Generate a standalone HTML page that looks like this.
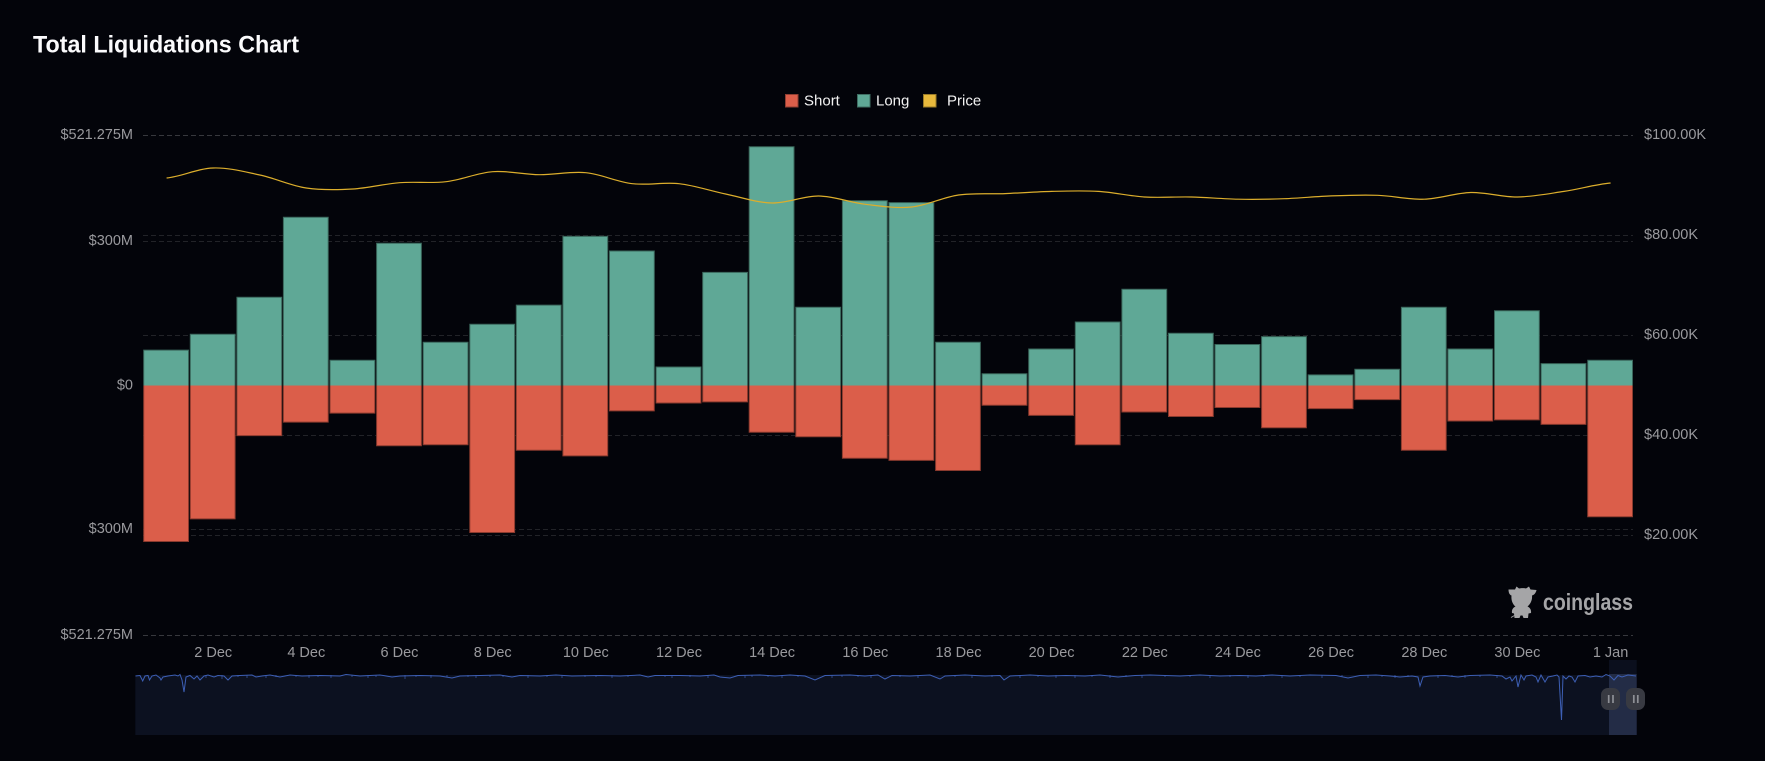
<!DOCTYPE html>
<html><head><meta charset="utf-8"><title>Total Liquidations Chart</title>
<style>
html,body{margin:0;padding:0;background:#03040a;width:1765px;height:761px;overflow:hidden}
svg{display:block}
text{font-family:"Liberation Sans",sans-serif}
</style></head><body>
<svg width="1765" height="761" viewBox="0 0 1765 761" xmlns="http://www.w3.org/2000/svg">
<rect width="1765" height="761" fill="#03040a"/>
<text x="33" y="52.5" font-size="24" font-weight="700" fill="#fbfbfd" textLength="266" lengthAdjust="spacingAndGlyphs">Total Liquidations Chart</text>

<g font-size="15" fill="#f2f2f2">
<rect x="785.5" y="94.5" width="12.5" height="12.5" fill="#db5e4a" stroke="#8f3e32"/><text x="804" y="105.5">Short</text>
<rect x="857.5" y="94.5" width="12.5" height="12.5" fill="#5fa896" stroke="#3f6e63"/><text x="876" y="105.5">Long</text>
<rect x="923.5" y="94.5" width="12.5" height="12.5" fill="#e8b93c" stroke="#9a7b28"/><text x="947" y="105.5">Price</text>
</g>

<g stroke-width="1" stroke-dasharray="5 3" fill="none">
<path stroke="#37383d" d="M143 135.5H1633M143 635.5H1633"/>
<path stroke="#222328" d="M143 235.5H1633M143 241.5H1633M143 335.5H1633M143 435.5H1633M143 529.5H1633M143 535.5H1633"/>
</g>

<g transform="translate(.4 0)">
<path fill="#5fa896" stroke="#3a665b" stroke-width="1" d="M143.3 385.5V350.1h44.8V385.5M189.9 385.5V334.3h44.8V385.5M236.5 385.5V297.2h44.8V385.5M283 385.5V217.3h44.8V385.5M329.6 385.5V360.2h44.8V385.5M376.2 385.5V243.2h44.8V385.5M422.8 385.5V342.2h44.8V385.5M469.4 385.5V324.2h44.8V385.5M515.9 385.5V305.1h44.8V385.5M562.5 385.5V236.4h44.8V385.5M609.1 385.5V251h44.8V385.5M655.7 385.5V367h44.8V385.5M702.3 385.5V272.4h44.8V385.5M748.8 385.5V146.7h44.8V385.5M795.4 385.5V307.3h44.8V385.5M842 385.5V200.7h44.8V385.5M888.6 385.5V202.6h44.8V385.5M935.2 385.5V342.2h44.8V385.5M981.7 385.5V373.7h44.8V385.5M1028.3 385.5V349h44.8V385.5M1074.9 385.5V322h44.8V385.5M1121.5 385.5V289.3h44.8V385.5M1168.1 385.5V333.2h44.8V385.5M1214.6 385.5V344.5h44.8V385.5M1261.2 385.5V336.6h44.8V385.5M1307.8 385.5V374.9h44.8V385.5M1354.4 385.5V369.2h44.8V385.5M1401 385.5V307.3h44.8V385.5M1447.5 385.5V349h44.8V385.5M1494.1 385.5V310.7h44.8V385.5M1540.7 385.5V363.6h44.8V385.5M1587.3 385.5V360.2h44.8V385.5"/>
<path fill="#db5e4a" stroke="#8a3a2e" stroke-width="1" d="M143.3 385.5V541.5h44.8V385.5M189.9 385.5V518.9h44.8V385.5M236.5 385.5V435.6h44.8V385.5M283 385.5V422.1h44.8V385.5M329.6 385.5V413.1h44.8V385.5M376.2 385.5V445.8h44.8V385.5M422.8 385.5V444.7h44.8V385.5M469.4 385.5V532.5h44.8V385.5M515.9 385.5V450.3h44.8V385.5M562.5 385.5V455.9h44.8V385.5M609.1 385.5V410.9h44.8V385.5M655.7 385.5V403h44.8V385.5M702.3 385.5V401.9h44.8V385.5M748.8 385.5V432.3h44.8V385.5M795.4 385.5V436.8h44.8V385.5M842 385.5V458.2h44.8V385.5M888.6 385.5V460.4h44.8V385.5M935.2 385.5V470.5h44.8V385.5M981.7 385.5V405.3h44.8V385.5M1028.3 385.5V415.4h44.8V385.5M1074.9 385.5V444.7h44.8V385.5M1121.5 385.5V412h44.8V385.5M1168.1 385.5V416.5h44.8V385.5M1214.6 385.5V407.5h44.8V385.5M1261.2 385.5V427.8h44.8V385.5M1307.8 385.5V408.6h44.8V385.5M1354.4 385.5V399.6h44.8V385.5M1401 385.5V450.3h44.8V385.5M1447.5 385.5V421h44.8V385.5M1494.1 385.5V419.9h44.8V385.5M1540.7 385.5V424.4h44.8V385.5M1587.3 385.5V516.7h44.8V385.5"/>
</g>

<path fill="none" stroke="#dcae2c" stroke-width="1.2" d="M166.6 178C182.1 176.3 197.7 168.5 213.2 168S244.3 171.7 259.8 175S290.8 185.7 306.3 188S337.4 189.9 352.9 189S384 183.9 399.5 182.7S430.6 183.5 446.1 181.7S477.2 172.9 492.7 171.7S523.7 174.5 539.2 174.7S570.3 171.2 585.8 172.7S616.9 181.9 632.4 183.7S663.5 182 679 183.7S710.1 190.8 725.6 194S756.6 202.7 772.1 203S803.2 195.8 818.7 196S849.8 202.5 865.3 204.3S896.4 208.6 911.9 207S943 197.2 958.5 195S989.5 194.2 1005 193.6S1036.1 191.8 1051.6 191.4S1082.7 190.5 1098.2 191.4S1129.3 196.1 1144.8 197S1175.9 196.6 1191.4 197S1222.4 198.9 1237.9 199.2S1269 199.3 1284.5 198.7S1315.6 196.5 1331.1 195.9S1362.2 194.7 1377.7 195.3S1408.8 199.7 1424.3 199.2S1455.3 192.9 1470.8 192.5S1501.9 197.2 1517.4 197S1548.5 193.7 1564 191.4S1595.1 184.4 1610.6 183"/>

<g font-size="14.5" fill="#9a9a9e">
<g text-anchor="end">
<text x="133" y="139">$521.275M</text>
<text x="133" y="245">$300M</text>
<text x="133" y="389.5">$0</text>
<text x="133" y="533">$300M</text>
<text x="133" y="639">$521.275M</text>
</g>
<text x="1644" y="139">$100.00K</text>
<text x="1644" y="239">$80.00K</text>
<text x="1644" y="339">$60.00K</text>
<text x="1644" y="439">$40.00K</text>
<text x="1644" y="539">$20.00K</text>
<g text-anchor="middle">
<text x="213.2" y="657">2 Dec</text>
<text x="306.3" y="657">4 Dec</text>
<text x="399.5" y="657">6 Dec</text>
<text x="492.7" y="657">8 Dec</text>
<text x="585.8" y="657">10 Dec</text>
<text x="679" y="657">12 Dec</text>
<text x="772.1" y="657">14 Dec</text>
<text x="865.3" y="657">16 Dec</text>
<text x="958.5" y="657">18 Dec</text>
<text x="1051.6" y="657">20 Dec</text>
<text x="1144.8" y="657">22 Dec</text>
<text x="1237.9" y="657">24 Dec</text>
<text x="1331.1" y="657">26 Dec</text>
<text x="1424.3" y="657">28 Dec</text>
<text x="1517.4" y="657">30 Dec</text>
<text x="1610.6" y="657">1 Jan</text>
</g>
</g>

<path fill="#a5a5a7" d="M1508.5 589.5C1511 589.5 1513 589.5 1515 589.5L1516.5 586.5L1519 588.5C1521 588 1524 588 1526 588.5L1529 586.5L1530.5 589.5L1536.5 590C1536 593 1534 595 1532 595.5C1532.5 600 1530.5 604 1527.5 606.5C1530 607.5 1531.5 610 1531 613L1528.5 613.5L1528 618L1523.5 618L1522.5 615.5L1520.5 615.5L1519.5 618L1514.5 618L1514 613.5L1512 613C1511.5 610 1513 607.5 1515.5 606.5C1512.5 604 1511 600 1511.5 595.5C1509.5 595 1508.5 592.5 1508.5 589.5Z"/>
<path stroke="#a5a5a7" stroke-width="1" fill="none" d="M1511 617.5L1514.5 615.5"/>
<text x="1543" y="610" font-size="23" font-weight="700" fill="#a5a5a7" textLength="90" lengthAdjust="spacingAndGlyphs">coinglass</text>

<rect x="135.3" y="675" width="1501.4" height="60" fill="#0c1120"/>
<rect x="1609" y="660" width="27.7" height="14" fill="#0b0f1d"/>
<rect x="1609" y="674" width="27.7" height="61" fill="#232c46"/>
<path fill="none" stroke="#3d5fb5" stroke-width="1" d="M135.5 676L140 675.5L142.7 681L145 676L148 675.5L149.5 680L152 676L156 675L160 678L161 680L163 677L168 676L175 675L178 676L180 674.5L182 680L184 692L186 677L190 675.5L194 679L197 676L200 680L204 676L208 675L214 677L218 675.5L224 676L228 680L232 676L240 675.5L252 675L256 677L262 676L270 675L280 677L290 675L302 676L320 675.5L340 676L346 674.5L360 676L380 675L392 677L400 676L420 675.5L440 676L452 678L460 676L480 675.5L500 675L512 677L520 675.5L540 676L556 675L572 676L600 675.5L620 676L640 675L648 677L655 675.5L680 675.5L700 676L714 675L720 677L730 678L738 675.5L760 675L775 676L790 675L805 676L815 680L825 675.5L850 675L865 676L878 675L885 679L892 675.5L910 676L930 675L940 679L945 676L965 675L985 676L1000 675.5L1004 680L1010 676L1030 675L1048 676L1066 675.5L1085 676L1100 675L1118 677L1135 675.5L1150 675L1180 676L1200 675L1220 676L1240 675.5L1256 676L1272 675L1290 676L1310 675L1336 675.5L1348 678L1360 675.5L1376 675L1390 676L1400 677L1412 676L1418 677L1420 686L1423 677L1430 676L1445 675.5L1458 677L1470 675.5L1490 675L1502 676L1506 679L1510 677L1512 681L1516 676L1518 687L1521 675L1524 680L1526 676L1532 675L1536 677L1538 682L1541 675L1545 682L1548 677L1553 676L1557 675L1559 677L1561.5 720L1563 676L1566 679L1569 676L1572 677L1575 682L1578 676L1585 675.5L1590 677L1596 676L1602 677L1606 674.5L1610 676L1614 680L1618 675.5L1622 677L1628 675L1636 676"/>
<path fill="none" stroke="#3d5fb5" stroke-opacity=".65" stroke-width="1" d="M206 675v3M222 675v4M238 675v2M247 675v3M266 675v3M276 675v2M296 675v2M309 675v3M318 675v2M331 675v3M352 675v2M368 675v3M376 675v2M405 675v4M416 675v2M431 675v3M447 675v2M468 675v2M476 675v3M490 675v2M503 675v2M528 675v3M547 675v2M562 675v3M585 675v2M596 675v2M612 675v3M628 675v2M665 675v2M672 675v3M690 675v2M708 675v3M745 675v3M752 675v2M768 675v2M782 675v3M798 675v2M832 675v3M842 675v2M858 675v2M871 675v3M900 675v2M918 675v3M955 675v2M972 675v3M992 675v2M1020 675v3M1038 675v2M1056 675v3M1075 675v3M1092 675v2M1110 675v3M1126 675v2M1142 675v3M1165 675v2M1190 675v2M1210 675v3M1230 675v2M1248 675v3M1264 675v2M1282 675v3M1300 675v2M1322 675v3M1342 675v2M1368 675v3M1382 675v2M1395 675v3M1408 675v2M1438 675v3M1452 675v2M1465 675v3M1480 675v2M1497 675v3"/>

<rect x="1601" y="688" width="19" height="22" rx="7" fill="#383a42"/>
<rect x="1626" y="688" width="19" height="22" rx="7" fill="#383a42"/>
<path stroke="#8e9096" stroke-width="1.7" fill="none" d="M1608.7 695V703M1613 695V703M1633.8 695V703M1637.8 695V703"/>
</svg>
</body></html>
